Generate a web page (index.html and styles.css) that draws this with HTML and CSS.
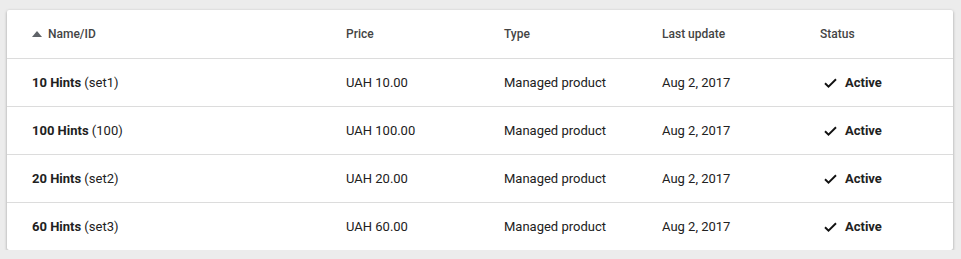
FILE: index.html
```html
<!DOCTYPE html>
<html lang="en">
<head>
    <meta charset="UTF-8">
    <title>Managed products</title>
    <link rel="stylesheet" href="styles.css">
</head>
<body>
    <div class="card">
        <div class="row head">
            <div class="cell name-head">
                <svg class="sort" width="10" height="6" viewBox="0 0 10 6"><path d="M0 6 L5 0 L10 6 Z" fill="#5f6368"/></svg>
                Name/ID
            </div>
            <div class="cell">Price</div>
            <div class="cell">Type</div>
            <div class="cell">Last update</div>
            <div class="cell">Status</div>
        </div>

        <div class="row">
            <div class="cell"><b>10 Hints</b>&nbsp;(set1)</div>
            <div class="cell">UAH 10.00</div>
            <div class="cell">Managed product</div>
            <div class="cell">Aug 2, 2017</div>
            <div class="cell status">
                <svg class="check" width="13" height="10" viewBox="0 0 13 10"><path d="M1 5.2 L4.5 8.6 L12 1.2" fill="none" stroke="#111" stroke-width="1.9"/></svg>
                Active
            </div>
        </div>
        <div class="row">
            <div class="cell"><b>100 Hints</b>&nbsp;(100)</div>
            <div class="cell">UAH 100.00</div>
            <div class="cell">Managed product</div>
            <div class="cell">Aug 2, 2017</div>
            <div class="cell status">
                <svg class="check" width="13" height="10" viewBox="0 0 13 10"><path d="M1 5.2 L4.5 8.6 L12 1.2" fill="none" stroke="#111" stroke-width="1.9"/></svg>
                Active
            </div>
        </div>
        <div class="row">
            <div class="cell"><b>20 Hints</b>&nbsp;(set2)</div>
            <div class="cell">UAH 20.00</div>
            <div class="cell">Managed product</div>
            <div class="cell">Aug 2, 2017</div>
            <div class="cell status">
                <svg class="check" width="13" height="10" viewBox="0 0 13 10"><path d="M1 5.2 L4.5 8.6 L12 1.2" fill="none" stroke="#111" stroke-width="1.9"/></svg>
                Active
            </div>
        </div>
        <div class="row last">
            <div class="cell"><b>60 Hints</b>&nbsp;(set3)</div>
            <div class="cell">UAH 60.00</div>
            <div class="cell">Managed product</div>
            <div class="cell">Aug 2, 2017</div>
            <div class="cell status">
                <svg class="check" width="13" height="10" viewBox="0 0 13 10"><path d="M1 5.2 L4.5 8.6 L12 1.2" fill="none" stroke="#111" stroke-width="1.9"/></svg>
                Active
            </div>
        </div>
    </div>
</body>
</html>
```

FILE: styles.css
```css
* {
    margin: 0;
    padding: 0;
    box-sizing: border-box;
}
body {
    background-color: #ececec;
    font-family: Roboto, "Liberation Sans", sans-serif;
    padding: 10px 8px 0 7px;
}

/* Table card */
.card {
    background-color: #fff;
    width: 946px;
    border-radius: 2px;
    box-shadow: 0 1px 3px rgba(0, 0, 0, 0.35);
}
.row {
    display: grid;
    grid-template-columns: 314px 158px 158px 158px 1fr;
    align-items: center;
    height: 48px;
    padding-left: 25px;
    border-bottom: 1px solid #dcdcdc;
    font-size: 13px;
    color: #212121;
}
.row.last {
    border-bottom: none;
    height: 47px;
}
.row b {
    font-weight: 700;
}
.head {
    height: 49px;
    font-size: 12px;
    font-weight: 500;
    color: #444;
}
.cell {
    display: flex;
    align-items: center;
    white-space: nowrap;
}
.sort {
    margin-right: 6px;
}
.status {
    font-weight: 700;
    padding-left: 4px;
}
.check {
    margin-right: 8px;
}
```
